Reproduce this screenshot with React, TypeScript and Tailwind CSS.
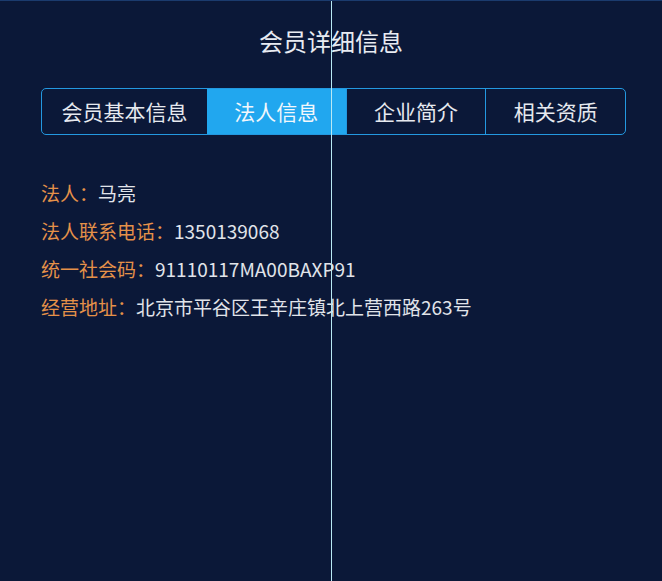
import React, { useState } from 'react';

const tabs = ['会员基本信息', '法人信息', '企业简介', '相关资质'];

const rows = [
  { label: '法人：', value: '马亮' },
  { label: '法人联系电话：', value: '1350139068' },
  { label: '统一社会码：', value: '91110117MA00BAXP91' },
  { label: '经营地址：', value: '北京市平谷区王辛庄镇北上营西路263号' },
];

const App: React.FC = () => {
  const [active, setActive] = useState(1);

  return (
    <div
      className="relative h-[581px] w-full overflow-hidden bg-[#0b1838] border-t border-[#1b3b6e]"
      style={{ fontFamily: '"Noto Sans CJK SC", "Noto Sans", sans-serif' }}
    >
      <h1 className="pt-[23px] text-center text-[24px] leading-[34px] font-normal text-[#e8ebf2]">
        会员详细信息
      </h1>

      <div className="mt-[30px] ml-[41px] flex h-[47px] w-[585px] overflow-hidden rounded-[5px] border-[1.5px] border-[#2398e0]">
        {tabs.map((t, i) => (
          <button
            key={t}
            onClick={() => setActive(i)}
            className={`flex items-center justify-center text-[21px] ${i === 0 ? 'w-[165px]' : 'flex-1'} ${i > 1 ? 'border-l-[1.5px] border-[#2398e0]' : ''} ${active === i ? 'bg-[#21a7ef] text-[#f2f7fc]' : 'text-[#e6e9ef]'}`}
          >
            {t}
          </button>
        ))}
      </div>

      <div className="mt-[39px] ml-[41px]">
        {rows.map(r => (
          <div key={r.label} className="flex text-[19px] leading-[38px]">
            <span className="text-[#e59149]">{r.label}</span>
            <span className="text-[#e1e4ea]">{r.value}</span>
          </div>
        ))}
      </div>

      <div className="absolute top-0 bottom-0 left-[331px] w-px bg-[#b9e9f4]" />
    </div>
  );
};

export default App;
